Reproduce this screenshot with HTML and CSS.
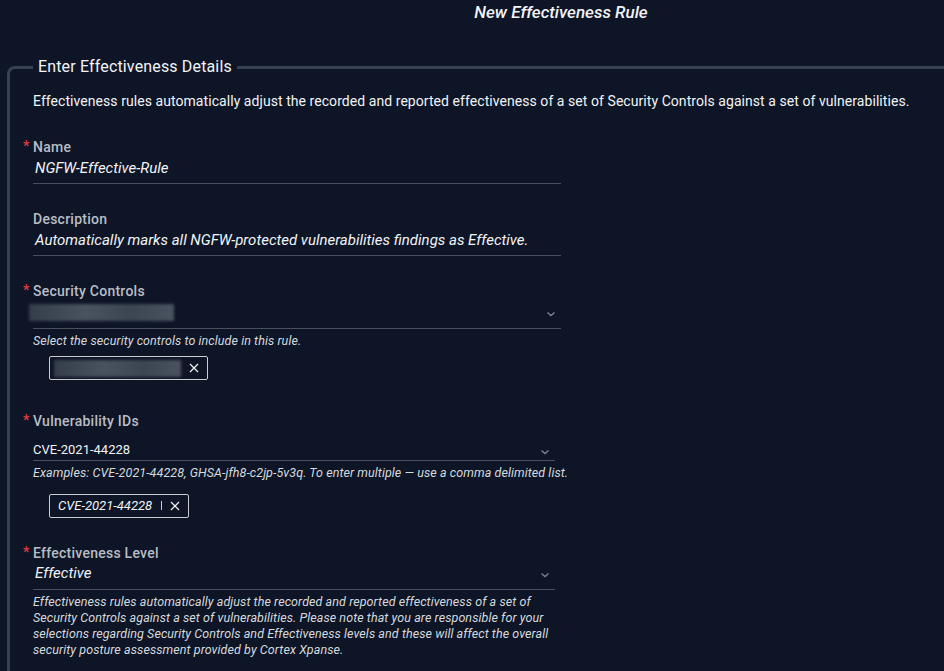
FILE: index.html
```html
<!DOCTYPE html>
<html>
<head>
    <title>New Effectiveness Rule</title>
    <link rel="stylesheet" href="styles.css">
</head>
<body>
    <h2 class="page-title">New Effectiveness Rule</h2>

    <fieldset class="details">
        <legend>Enter Effectiveness Details</legend>
        <p class="intro">Effectiveness rules automatically adjust the recorded and reported effectiveness of a set of Security Controls against a set of vulnerabilities.</p>

        <div class="field">
            <label class="required">Name</label>
            <div class="control">
                <span class="value italic">NGFW-Effective-Rule</span>
            </div>
        </div>

        <div class="field">
            <label>Description</label>
            <div class="control">
                <span class="value italic">Automatically marks all NGFW-protected vulnerabilities findings as Effective.</span>
            </div>
        </div>

        <div class="field">
            <label class="required">Security Controls</label>
            <div class="control select blurred">
                <span class="redacted wide"></span>
                <svg class="chevron" width="10" height="6" viewBox="0 0 10 6"><path d="M1.5 1.5l3.5 3 3.5-3" fill="none" stroke="#7d838e" stroke-width="1.4"/></svg>
            </div>
            <p class="hint">Select the security controls to include in this rule.</p>
            <div class="chip">
                <span class="redacted short"></span>
                <svg class="chip-close" width="10" height="10" viewBox="0 0 10 10"><path d="M1 1l8 8M9 1l-8 8" stroke="#f2f4f7" stroke-width="1.2"/></svg>
            </div>
        </div>

        <div class="field tall">
            <label class="required">Vulnerability IDs</label>
            <div class="control select narrow">
                <span class="value plain">CVE-2021-44228</span>
                <svg class="chevron" width="10" height="6" viewBox="0 0 10 6"><path d="M1.5 1.5l3.5 3 3.5-3" fill="none" stroke="#7d838e" stroke-width="1.4"/></svg>
            </div>
            <p class="hint nowrap">Examples: CVE-2021-44228, GHSA-jfh8-c2jp-5v3q. To enter multiple &mdash; use a comma delimited list.</p>
            <div class="chip spaced">
                <span class="chip-text">CVE-2021-44228</span>
                <span class="chip-sep"></span>
                <svg class="chip-close" width="10" height="10" viewBox="0 0 10 10"><path d="M1 1l8 8M9 1l-8 8" stroke="#f2f4f7" stroke-width="1.2"/></svg>
            </div>
        </div>

        <div class="field">
            <label class="required">Effectiveness Level</label>
            <div class="control select narrow">
                <span class="value italic">Effective</span>
                <svg class="chevron" width="10" height="6" viewBox="0 0 10 6"><path d="M1.5 1.5l3.5 3 3.5-3" fill="none" stroke="#7d838e" stroke-width="1.4"/></svg>
            </div>
            <p class="hint long">Effectiveness rules automatically adjust the recorded and reported effectiveness of a set of Security Controls against a set of vulnerabilities. Please note that you are responsible for your selections regarding Security Controls and Effectiveness levels and these will affect the overall security posture assessment provided by Cortex Xpanse.</p>
        </div>
    </fieldset>
</body>
</html>
```
FILE: styles.css
```css
body {
    margin: 0;
    background-color: #0d1526;
    color: #f2f4f7;
    font-family: Roboto, "Noto Sans", sans-serif;
    overflow: hidden;
}
.page-title {
    margin: 0;
    padding: 3px 0 0 178px;
    height: 54px;
    text-align: center;
    font-size: 17px;
    font-weight: 500;
    font-style: italic;
    line-height: 18px;
}
.details {
    margin: 0 -40px 0 7px;
    padding: 15px 0 40px 23px;
    border: 3px solid #38414f;
    border-right: none;
    border-bottom: none;
    border-top-left-radius: 8px;
}
.details legend {
    padding: 0 5px;
    font-size: 16px;
    line-height: 20px;
    letter-spacing: 0.15px;
}
.intro {
    margin: 0;
    font-size: 14px;
    line-height: 18px;
    letter-spacing: 0.06px;
}
.field {
    margin-top: 28px;
    width: 528px;
}
.field + .field {
    margin-top: 26px;
}
.field.tall {
    margin-top: 31px;
}
label {
    display: block;
    position: relative;
    font-size: 14px;
    font-weight: 500;
    color: #b9bdc5;
    line-height: 18px;
    letter-spacing: 0.25px;
}
label.required::before {
    content: "*";
    position: absolute;
    left: -10px;
    top: -1px;
    color: #e0393e;
    font-weight: 700;
}
.control {
    display: flex;
    align-items: center;
    height: 28px;
    border-bottom: 1px solid #4a505b;
    padding-bottom: 4px;
    box-sizing: border-box;
}
.control.blurred {
    height: 29px;
}
.control.narrow {
    width: 522px;
}
.field.tall .control {
    height: 31px;
    padding-bottom: 0;
    padding-top: 10px;
}
.value {
    font-size: 15px;
    padding-left: 2px;
    white-space: nowrap;
}
.italic {
    font-style: italic;
}
.plain {
    font-size: 13px;
    padding-left: 0;
}
.select .chevron {
    margin-left: auto;
    margin-right: 5px;
    margin-top: 4px;
}
.redacted {
    display: block;
    height: 17px;
    background: linear-gradient(90deg, #363e4c, #4a5260 40%, #3d4553 70%, #4a5260);
    filter: blur(1.5px);
}
.redacted.wide {
    width: 145px;
    margin-left: -4px;
}
.redacted.short {
    width: 127px;
}
.hint {
    margin: 4px 0 0;
    font-size: 12.5px;
    font-style: italic;
    line-height: 16px;
    letter-spacing: 0.08px;
    color: #d6d9de;
}
.hint.nowrap {
    white-space: nowrap;
}
.hint.long {
    width: 522px;
}
.chip {
    display: inline-flex;
    align-items: center;
    margin: 7px 0 0 16px;
    padding: 0 8px 0 4px;
    height: 24px;
    border: 1px solid #c9ccd2;
    border-radius: 2px;
    box-sizing: border-box;
}
.chip.spaced {
    margin-top: 13px;
}
.chip .chip-close {
    margin-left: 8px;
}
.chip-text {
    font-size: 13px;
    font-style: italic;
    padding-left: 4px;
}
.chip-sep {
    width: 1px;
    height: 9px;
    background-color: #c9ccd2;
    margin: 0 0 0 9px;
}
```
